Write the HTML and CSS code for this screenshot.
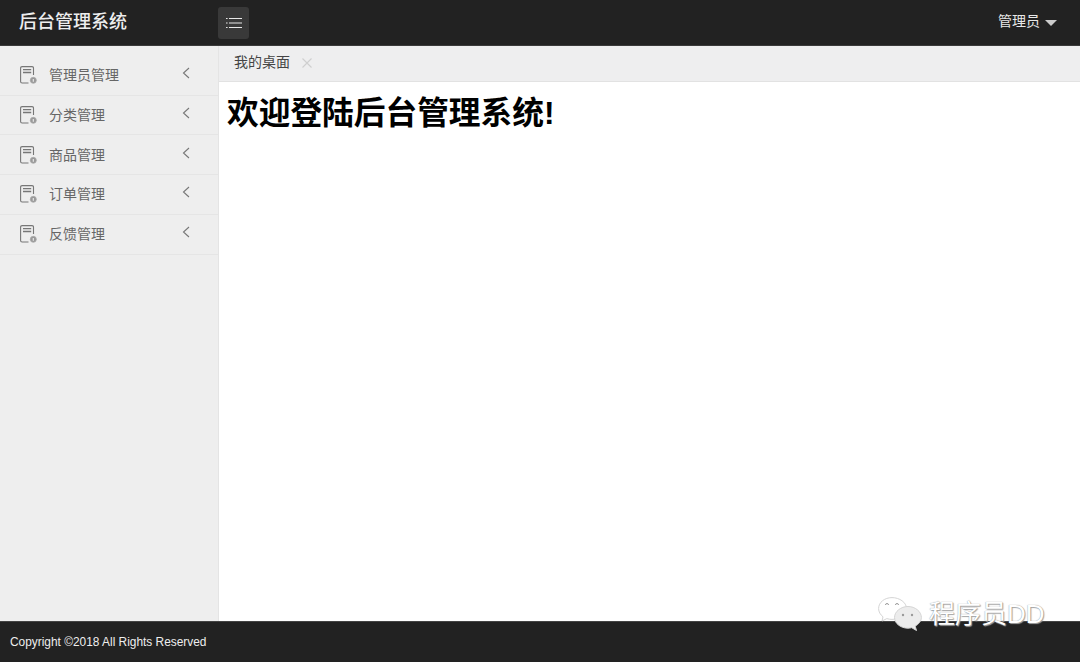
FILE: index.html
```html
<!DOCTYPE html>
<html lang="zh-CN">
<head>
<meta charset="utf-8">
<title>后台管理系统</title>
<link rel="stylesheet" href="styles.css">
</head>
<body>
<div class="app">
  <header class="header">
    <div class="logo">后台管理系统</div>
    <button class="menu-btn" type="button" aria-label="菜单">
      <svg width="16" height="12" viewBox="0 0 16 12"><g stroke="#e8e8e8" stroke-width="1.2" fill="none"><path d="M3 1.500H16M3 6H16M3 10.500H16"/><path d="M0 1.500H1.600M0 6H1.600M0 10.500H1.600"/></g></svg>
    </button>
    <div class="user">管理员<span class="caret"></span></div>
  </header>
  <div class="body">
    <aside class="side">
      <div class="item"><svg class="doc" viewBox="0 0 17 18"><use href="#doc"/></svg><span class="label">管理员管理</span><svg class="chev" viewBox="0 0 8 12"><path d="M7 1L1.500 6L7 11"/></svg></div>
      <div class="item"><svg class="doc" viewBox="0 0 17 18"><use href="#doc"/></svg><span class="label">分类管理</span><svg class="chev" viewBox="0 0 8 12"><path d="M7 1L1.500 6L7 11"/></svg></div>
      <div class="item"><svg class="doc" viewBox="0 0 17 18"><use href="#doc"/></svg><span class="label">商品管理</span><svg class="chev" viewBox="0 0 8 12"><path d="M7 1L1.500 6L7 11"/></svg></div>
      <div class="item"><svg class="doc" viewBox="0 0 17 18"><use href="#doc"/></svg><span class="label">订单管理</span><svg class="chev" viewBox="0 0 8 12"><path d="M7 1L1.500 6L7 11"/></svg></div>
      <div class="item"><svg class="doc" viewBox="0 0 17 18"><use href="#doc"/></svg><span class="label">反馈管理</span><svg class="chev" viewBox="0 0 8 12"><path d="M7 1L1.500 6L7 11"/></svg></div>
    </aside>
    <main class="main">
      <div class="tabs"><span class="tab">我的桌面</span><svg class="close" viewBox="0 0 10 10"><path d="M0.500 0.500L9.500 9.500M9.500 0.500L0.500 9.500"/></svg></div>
      <h1 class="welcome">欢迎登陆后台管理系统!</h1>
    </main>
  </div>
  <footer class="footer">Copyright ©2018 All Rights Reserved</footer>
  <div class="mark">
    <svg class="wx" width="44" height="34" viewBox="0 0 44 34">
      <path d="M14 .6C6.500 .6 .6 5.400 .6 11.500C.6 15 2.500 17.800 5 19.800L4 24L8.800 21.600C10.500 22.100 12.200 22.400 14 22.400C21.500 22.400 28.500 17.500 28.500 11.500C28.500 5.400 21.500 .6 14 .6Z" fill="#fff" stroke="#d4d4d4" stroke-width="1"/>
      <path d="M30 9.500C22.800 9.500 16.500 14.600 16.500 20.500C16.500 26.500 22.800 31.200 30 31.200C31.200 31.200 32.500 31 33.700 30.700L38.500 33.500L37.200 29.200C40.500 27.200 43.400 24.200 43.400 20.500C43.400 14.600 37.200 9.500 30 9.500Z" fill="#ececec" stroke="#d4d4d4" stroke-width="1"/>
      <path d="M7.500 8a1.500 1.500 0 0 1 3 0M17.500 8a1.500 1.500 0 0 1 3 0" fill="none" stroke="#999" stroke-width="1"/>
      <circle cx="25" cy="18" r="1.200" fill="#999"/><circle cx="34" cy="18" r="1.200" fill="#999"/>
    </svg>
    <span class="mark-text">程序员DD</span>
  </div>
</div>
<svg width="0" height="0" class="defs"><defs>
  <g id="doc" fill="none" stroke="#777" stroke-width="1.100">
    <path d="M13.500 9V2.200Q13.500 .6 12 .6H2.100Q.6 .6 .6 2.200V15.400Q.6 17 2.100 17H8.500"/>
    <path d="M3 3.600H11.200M3 6.500H11.200" stroke-width="1.300"/>
    <circle cx="13.300" cy="14.300" r="3" fill="#999" stroke="#aaa" stroke-width=".8"/>
    <path d="M13.300 13V15.800" stroke="#eee"/>
  </g>
</defs></svg>
</body>
</html>
```
FILE: styles.css
```css
* { box-sizing: border-box; }
html, body { margin: 0; height: 100%; overflow: hidden; }
body { font-family: "Liberation Sans", "Noto Sans CJK SC", sans-serif; background: #fff; color: #000; }
.app { position: relative; width: 1080px; height: 662px; display: flex; flex-direction: column; }
.header { height: 46px; flex: none; background: #222; border-bottom: 1px solid #3a3a3a; display: flex; align-items: flex-start; color: #f5f5f5; }
.logo { width: 218px; padding: 9px 0 0 19px; font-size: 18px; line-height: 26px; font-weight: 500; color: #eee; }
.menu-btn { width: 31px; height: 32px; margin-top: 7px; padding: 0; border: 0; border-radius: 3px; background: #393939; display: flex; align-items: center; justify-content: center; }
.user { margin-left: auto; padding: 10px 23px 0 0; font-size: 14px; line-height: 22px; color: #e8e8e8; display: flex; align-items: center; }
.caret { margin: 3px 0 0 5px; border-style: solid; border-width: 6px 6px 0; border-color: #ccc transparent transparent; }
.body { flex: 1; display: flex; min-height: 0; }
.side { width: 219px; flex: none; background: #eee; border-right: 1px solid #e4e4e4; padding-top: 9.800px; }
.item { height: 39.800px; display: flex; align-items: flex-start; border-bottom: 1px solid #e5e5e5; padding: 10.200px 0 0 20px; color: #666; }
.doc { width: 17px; height: 18px; flex: none; }
.label { margin: -1px 0 0 12px; font-size: 14px; line-height: 20px; }
.chev { position: absolute; left: 182px; width: 8px; height: 12px; margin-top: 1px; fill: none; stroke: #777; stroke-width: 1.100; }
.main { flex: 1; min-width: 0; }
.tabs { height: 36px; background: #eeeeef; border-bottom: 1px solid #e2e2e2; display: flex; align-items: center; padding: 0 0 4px 15px; }
.tab { font-size: 14px; line-height: 20px; color: #444; }
.close { width: 10px; height: 10px; margin: 2px 0 0 12px; fill: none; stroke: #cfcfcf; stroke-width: 1.100; }
.welcome { margin: 11px 0 0 8px; font-size: 31.700px; line-height: 40px; font-weight: 700; color: #000; }
.footer { height: 41px; flex: none; background: #222; border-top: 1px solid #444; padding: 11px 0 0 10px; font-size: 11.900px; line-height: 18px; color: #eee; }
.mark { position: absolute; left: 878px; top: 597px; display: flex; align-items: center; }
.wx { flex: none; }
.mark-text { margin: 0 0 0 7px; font-size: 26px; line-height: 34px; color: #fff; text-shadow: 0 0 1px #777, 1px 1px 1px #aaa; }
.defs { position: absolute; }
```
